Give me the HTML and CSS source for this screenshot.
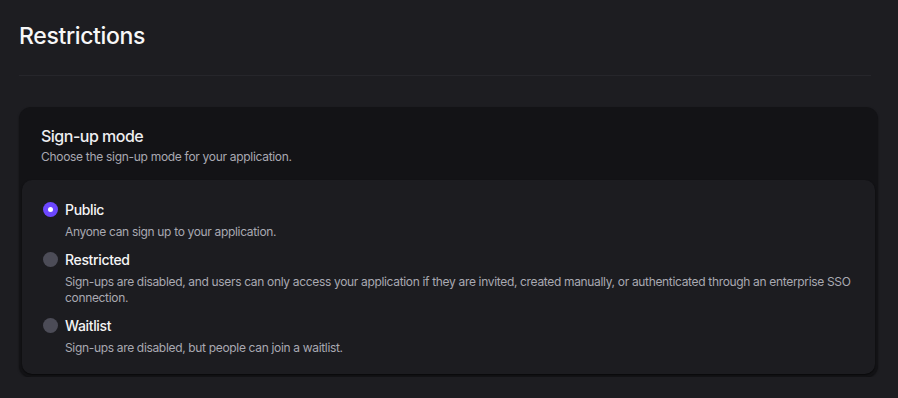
FILE: index.html
```html
<!DOCTYPE html>
<html lang="en">
<head>
<meta charset="utf-8">
<title>Restrictions</title>
<link rel="stylesheet" href="styles.css">
</head>
<body>
<main class="page">
  <h1 class="page-title">Restrictions</h1>
  <hr class="divider">
  <section class="card">
    <header class="card-header">
      <h2 class="card-title">Sign-up mode</h2>
      <p class="card-desc">Choose the sign-up mode for your application.</p>
    </header>
    <div class="card-body">
      <div class="option">
        <span class="radio radio-checked"></span>
        <div class="option-text">
          <div class="option-label">Public</div>
          <div class="option-desc">Anyone can sign up to your application.</div>
        </div>
      </div>
      <div class="option">
        <span class="radio"></span>
        <div class="option-text">
          <div class="option-label">Restricted</div>
          <div class="option-desc">Sign-ups are disabled, and users can only access your application if they are invited, created manually, or authenticated through an enterprise SSO connection.</div>
        </div>
      </div>
      <div class="option">
        <span class="radio"></span>
        <div class="option-text">
          <div class="option-label">Waitlist</div>
          <div class="option-desc">Sign-ups are disabled, but people can join a waitlist.</div>
        </div>
      </div>
    </div>
  </section>
</main>
</body>
</html>
```

FILE: styles.css
```css
html, body {
  margin: 0;
  padding: 0;
  background: #1d1d21;
}
body {
  font-family: Inter, "Noto Sans", sans-serif;
  color: #f4f4f5;
}
.page {
  padding: 20px 20px 0 19px;
}
.page-title {
  margin: 0;
  font-size: 23px;
  line-height: 32px;
  font-weight: 500;
  color: #f7f7f8;
  letter-spacing: -0.35px;
}
.divider {
  border: 0;
  height: 1px;
  background: #26262b;
  margin: 23px 7px 31px 0;
}
.card {
  background: #131316;
  border-radius: 12px;
  box-shadow: 0 1px 2px rgba(0,0,0,0.5);
  padding: 0 3px 3px 3px;
}
.card-header {
  padding: 17px 19px 15px 19px;
}
.card-title {
  margin: 0;
  font-size: 16px;
  line-height: 24px;
  font-weight: 500;
  color: #eeeef0;
  letter-spacing: -0.5px;
}
.card-desc {
  margin: 1px 0 0;
  font-size: 12px;
  line-height: 16px;
  color: #a9a9b2;
  letter-spacing: -0.3px;
}
.card-body {
  background: #1c1c20;
  border-radius: 10px;
  padding: 20px 12px 18px 21px;
  display: flex;
  flex-direction: column;
  gap: 10px;
  box-shadow: 0 1px 2px rgba(0,0,0,0.6);
}
.option {
  display: flex;
  gap: 7px;
  align-items: flex-start;
}
.radio {
  flex: none;
  width: 15px;
  height: 15px;
  margin-top: 2px;
  border-radius: 50%;
  background: #4c4c57;
  box-sizing: border-box;
  position: relative;
}
.radio-checked {
  background: #6c47ff;
}
.radio-checked::after {
  content: "";
  position: absolute;
  left: 5px;
  top: 5px;
  width: 5px;
  height: 5px;
  border-radius: 50%;
  background: #fff;
}
.option-label {
  font-size: 14px;
  line-height: 20px;
  font-weight: 500;
  color: #f4f4f5;
  letter-spacing: -0.35px;
}
.option-desc {
  margin-top: 4px;
  font-size: 12px;
  line-height: 16px;
  color: #a9a9b2;
  letter-spacing: -0.33px;
}
```
